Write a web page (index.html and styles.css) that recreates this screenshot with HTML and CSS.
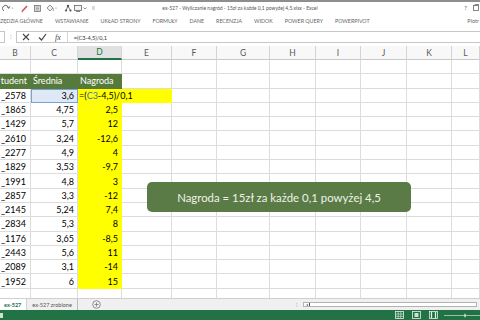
FILE: index.html
```html
<!DOCTYPE html>
<html lang="pl">
<head>
<meta charset="utf-8">
<title>ex-527 - Excel</title>
<link rel="stylesheet" href="styles.css">
</head>
<body>
<div class="app">
  <header class="titlebar">
    <div class="qat">
      <svg width="100" height="11" viewBox="0 0 100 11">
        <path d="M4 9 A3 3 0 1 1 8.5 6" fill="none" stroke="#666" stroke-width="1"/>
        <path d="M7 4.5 L8.8 6.5 L10 4.2" fill="none" stroke="#666" stroke-width="0.9"/>
        <circle cx="12.5" cy="6" r="0.6" fill="#777"/>
        <path d="M22 9.5 L27 4" stroke="#d9534f" stroke-width="1.6"/>
        <path d="M21.5 10 L23 10" stroke="#999" stroke-width="0.8"/>
        <rect x="34.5" y="3.5" width="6" height="6" fill="#dcdcdc" stroke="#777" stroke-width="0.8"/>
        <path d="M36 5 h3 M36 6.5 h3 M36 8 h3" stroke="#888" stroke-width="0.6"/>
        <path d="M47 6 L50 3 L53 6 L50 9 Z" fill="#eee" stroke="#777" stroke-width="0.8"/>
        <path d="M53 6 Q54 8 53 9" fill="none" stroke="#777" stroke-width="0.7"/>
        <circle cx="56" cy="6" r="0.6" fill="#777"/>
        <circle cx="68" cy="4" r="1.2" fill="#555"/>
        <circle cx="66" cy="8.5" r="1.1" fill="#555"/>
        <circle cx="70.5" cy="8.5" r="1.1" fill="#555"/>
        <path d="M68 4 L66 8.5 M68 4 L70.5 8.5" stroke="#555" stroke-width="0.8"/>
        <rect x="74.5" y="3.5" width="7" height="5" fill="#f2f2f2" stroke="#666" stroke-width="0.8"/>
        <path d="M76 9.5 h4" stroke="#666" stroke-width="0.8"/>
        <path d="M83.5 5.5 L85 7 L86.5 5.5" fill="none" stroke="#666" stroke-width="0.7"/>
        <path d="M92 5 h3 M92 7 h3" stroke="#888" stroke-width="0.6"/>
      </svg>
    </div>
    <div class="title">ex-527 - Wyliczanie nagród - 15zł za każde 0,1 powyżej 4,5.xlsx - Excel</div>
    <div class="winctl">
      <span class="help">?</span>
      <svg width="6" height="7" viewBox="0 0 6 7"><rect x="0.5" y="1.5" width="5" height="5" fill="none" stroke="#666" stroke-width="0.8"/><path d="M2 1.5 V0.5 H6" fill="none" stroke="#666" stroke-width="0.8"/></svg>
    </div>
  </header>

  <nav class="tabs">
    <span>ZĘDZIA GŁÓWNE</span>
    <span>WSTAWIANIE</span>
    <span>UKŁAD STRONY</span>
    <span>FORMUŁY</span>
    <span>DANE</span>
    <span>RECENZJA</span>
    <span>WIDOK</span>
    <span>POWER QUERY</span>
    <span>POWERPIVOT</span>
    <span class="user">Piotr</span>
  </nav>

  <div class="fbar">
    <div class="namebox"></div>
    <span class="grip">⁝</span>
    <div class="fbox">
      <div class="fbtns">
        <svg width="8" height="8" viewBox="0 0 8 8"><path d="M1 1 L7 7 M7 1 L1 7" stroke="#444" stroke-width="1.1"/></svg>
        <svg width="9" height="8" viewBox="0 0 9 8"><path d="M1 4.5 L3.5 7 L8 1" fill="none" stroke="#444" stroke-width="1.2"/></svg>
        <span class="fx">fx</span>
      </div>
      <div class="ftext">=(C3-4,5)/0,1</div>
    </div>
  </div>

  <main class="sheet">
    <b class="ch">B</b><b class="ch">C</b><b class="ch sel">D</b><b class="ch">E</b><b class="ch">F</b><b class="ch">G</b><b class="ch">H</b><b class="ch">I</b><b class="ch">J</b><b class="ch">K</b><b class="ch">L</b>

    <i></i><i></i><i></i><i></i><i></i><i></i><i></i><i></i><i></i><i></i><i></i>

    <i class="th tb">tudent</i><i class="th">Średnia</i><i class="th">Nagroda</i><i></i><i></i><i></i><i></i><i></i><i></i><i></i><i></i>

    <i class="tb">_2578</i><i class="n ref">3,6</i><i class="edit">=(<span class="c3">C3</span>-4,5)/0,1</i><i></i><i></i><i></i><i></i><i></i><i></i><i></i>

    <i class="tb">_1865</i><i class="n">4,75</i><i class="n y">2,5</i><i></i><i></i><i></i><i></i><i></i><i></i><i></i><i></i>
    <i class="tb">_1429</i><i class="n">5,7</i><i class="n y">12</i><i></i><i></i><i></i><i></i><i></i><i></i><i></i><i></i>
    <i class="tb">_2610</i><i class="n">3,24</i><i class="n y">-12,6</i><i></i><i></i><i></i><i></i><i></i><i></i><i></i><i></i>
    <i class="tb">_2277</i><i class="n">4,9</i><i class="n y">4</i><i></i><i></i><i></i><i></i><i></i><i></i><i></i><i></i>
    <i class="tb">_1829</i><i class="n">3,53</i><i class="n y">-9,7</i><i></i><i></i><i></i><i></i><i></i><i></i><i></i><i></i>
    <i class="tb">_1991</i><i class="n">4,8</i><i class="n y">3</i><i></i><i></i><i></i><i></i><i></i><i></i><i></i><i></i>
    <i class="tb">_2857</i><i class="n">3,3</i><i class="n y">-12</i><i></i><i></i><i></i><i></i><i></i><i></i><i></i><i></i>
    <i class="tb">_2145</i><i class="n">5,24</i><i class="n y">7,4</i><i></i><i></i><i></i><i></i><i></i><i></i><i></i><i></i>
    <i class="tb">_2834</i><i class="n">5,3</i><i class="n y">8</i><i></i><i></i><i></i><i></i><i></i><i></i><i></i><i></i>
    <i class="tb">_1176</i><i class="n">3,65</i><i class="n y">-8,5</i><i></i><i></i><i></i><i></i><i></i><i></i><i></i><i></i>
    <i class="tb">_2443</i><i class="n">5,6</i><i class="n y">11</i><i></i><i></i><i></i><i></i><i></i><i></i><i></i><i></i>
    <i class="tb">_2089</i><i class="n">3,1</i><i class="n y">-14</i><i></i><i></i><i></i><i></i><i></i><i></i><i></i><i></i>
    <i class="tb">_1952</i><i class="n">6</i><i class="n y">15</i><i></i><i></i><i></i><i></i><i></i><i></i><i></i><i></i>

    <i></i><i></i><i></i><i></i><i></i><i></i><i></i><i></i><i></i><i></i><i></i>
    <i></i><i></i><i></i><i></i><i></i><i></i><i></i><i></i><i></i><i></i><i></i>

    <div class="note">Nagroda = 15zł za każde 0,1 powyżej 4,5</div>
  </main>

  <div class="sheettabs">
    <span class="stab active">ex-527</span>
    <span class="stab">ex-527 zrobione</span>
    <span class="addsheet">
      <svg width="9" height="9" viewBox="0 0 9 9"><circle cx="4.5" cy="4.5" r="3.8" fill="none" stroke="#777" stroke-width="0.8"/><path d="M4.5 2.5 V6.5 M2.5 4.5 H6.5" stroke="#777" stroke-width="0.8"/></svg>
    </span>
    <span class="spacer"></span>
    <span class="grip2">⁝</span>
    <div class="hscroll"><span class="larr">◂</span><span class="thumb"></span></div>
  </div>

  <footer class="status">
    <span class="sq"></span>
    <svg width="90" height="10" viewBox="0 0 90 10">
      <rect x="3.5" y="1.5" width="8" height="7" fill="none" stroke="#e6efe8" stroke-width="0.8"/>
      <path d="M3.5 4 h8 M3.5 6.3 h8 M6.2 1.5 v7 M8.8 1.5 v7" stroke="#e6efe8" stroke-width="0.6"/>
      <rect x="20.5" y="1.5" width="8" height="7" fill="none" stroke="#e6efe8" stroke-width="0.8"/>
      <rect x="22.5" y="3" width="4" height="4" fill="#cfe0d3"/>
      <rect x="37.5" y="1.5" width="8" height="7" fill="none" stroke="#e6efe8" stroke-width="0.8"/>
      <path d="M39.5 2 v6 M43.5 2 v6" stroke="#e6efe8" stroke-width="1.2"/>
      <path d="M52 5.5 H88" stroke="#cfe0d3" stroke-width="0.7"/>
      <path d="M73 3.8 V7.2" stroke="#e6efe8" stroke-width="1.2"/>
    </svg>
  </footer>
</div>
</body>
</html>
```

FILE: styles.css
```css
* { box-sizing: border-box; margin: 0; padding: 0; }
html, body { width: 480px; height: 320px; overflow: hidden; background: #fff; }
body { font-family: Lato, "Open Sans", "Liberation Sans", sans-serif; color: #000; }

.app { display: flex; flex-direction: column; width: 480px; height: 320px; overflow: hidden; }

/* title bar */
.titlebar {
  flex: none; height: 13px; border-top: 2px solid #8e8e8e;
  display: grid; grid-template-columns: 1fr auto 1fr; align-items: center;
}
.qat svg { display: block; }
.title { font-size: 5px; color: #555; white-space: nowrap; }
.winctl { justify-self: end; display: flex; align-items: center; gap: 6px; padding-right: 1px; }
.help { font-size: 6px; color: #555; }
.winctl svg { display: block; }

/* ribbon tabs */
.tabs {
  flex: none; height: 14px; display: flex; align-items: center; gap: 12px;
  font-size: 5.3px; color: #666; white-space: nowrap; padding-top: 1px;
}
.tabs .user { margin-left: auto; margin-right: 1px; font-size: 5.5px; }

/* formula bar */
.fbar { flex: none; height: 19px; padding: 4px 0 3px; display: flex; align-items: stretch; }
.namebox { width: 5px; border: 1px solid #c6c6c6; border-left: none; }
.grip { width: 11px; text-align: center; font-size: 6px; color: #888; line-height: 12px; }
.fbox { flex: 1; display: flex; align-items: center; border: 1px solid #c6c6c6; border-right: none; }
.fbtns { display: flex; align-items: center; gap: 8px; padding: 0 6px 0 5px; height: 100%; border-right: 1px solid #d6d6d6; }
.fbtns svg { display: block; }
.fx { font-family: "Liberation Serif", serif; font-style: italic; font-size: 8px; color: #444; }
.ftext { padding-left: 6px; font-size: 5.6px; color: #333; }

/* sheet */
.sheet {
  flex: none; height: 252px; position: relative; overflow: hidden;
  display: grid;
  grid-template-columns: 31px 47px 44px 50px 45px 53px 46px 45px 46px 45px 28px;
  grid-template-rows: 14px;
  grid-auto-rows: 14.31px;
  font-size: 9px;
}
.sheet > i, .sheet > b {
  font-style: normal; font-weight: normal;
  display: flex; align-items: center; overflow: hidden; white-space: nowrap;
  border-right: 1px solid #dcdcdc; border-bottom: 1px solid #dcdcdc;
}
.sheet > .ch {
  justify-content: center; background: #f8f8f8; color: #5a5a5a;
  border-right-color: #d4d4d4; border-bottom: 1px solid #c9c9c9; font-size: 8.5px;
}
.sheet > .ch.sel { background: #e1e1e1; color: #217346; border-bottom: 2px solid #217346; }

.sheet > .th { background: #557a3b; color: #fff; border-color: #557a3b; padding-left: 2px; }
.sheet > .tb { justify-content: flex-end; padding-right: 4px; }
.sheet > .th.tb { padding-left: 0; padding-right: 3px; }
.sheet > .n { justify-content: flex-end; padding-right: 3px; }
.sheet > .y { background: #ffff00; border-color: #ffff00; }
.sheet > .ref { background: #dfe8f6; border: 1px solid #7aa0d8; }
.sheet > .edit {
  grid-column: span 2; background: #ffff00; border-color: #ffff00; padding-left: 1px;
}
.c3 { color: #3f6fc9; }

.note {
  position: absolute; left: 147px; top: 136px; width: 264px; height: 30px;
  background: #5b7b46; border-radius: 5px;
  display: flex; align-items: center; justify-content: center;
  color: #eef3e8; font-size: 11.4px;
}

/* sheet tabs */
.sheettabs {
  flex: none; height: 12px; display: flex; align-items: stretch;
  background: #f0f0f0; border-top: 1px solid #cfcfcf;
  font-size: 5.5px; color: #555;
}
.stab { display: flex; align-items: center; padding: 0 5px; border-right: 1px solid #bdbdbd; }
.stab.active { background: #fff; color: #217346; font-weight: bold; padding: 0 5px 0 4px; border-right-color: #d0d0d0; }
.stab:nth-child(2) { padding: 0 5px 0 5px; }
.addsheet { display: flex; align-items: center; padding-left: 14px; }
.addsheet svg { display: block; }
.spacer { flex: 1; }
.grip2 { display: flex; align-items: center; font-size: 6px; color: #888; padding-right: 5px; }
.hscroll {
  width: 174px; margin: 3px 3px 3px 0; border: 1px solid #b3b3b3; background: #fff;
  display: flex; align-items: center;
}
.larr { font-size: 4px; color: #666; width: 5px; text-align: center; }
.thumb { width: 1px; height: 100%; background: #555; }

/* status bar */
.status {
  flex: none; height: 10px; background: #217346;
  display: flex; align-items: center; justify-content: space-between;
}
.sq { width: 3px; height: 5px; background: #cfe0d3; }
.status svg { display: block; margin-right: -2px; }
```
